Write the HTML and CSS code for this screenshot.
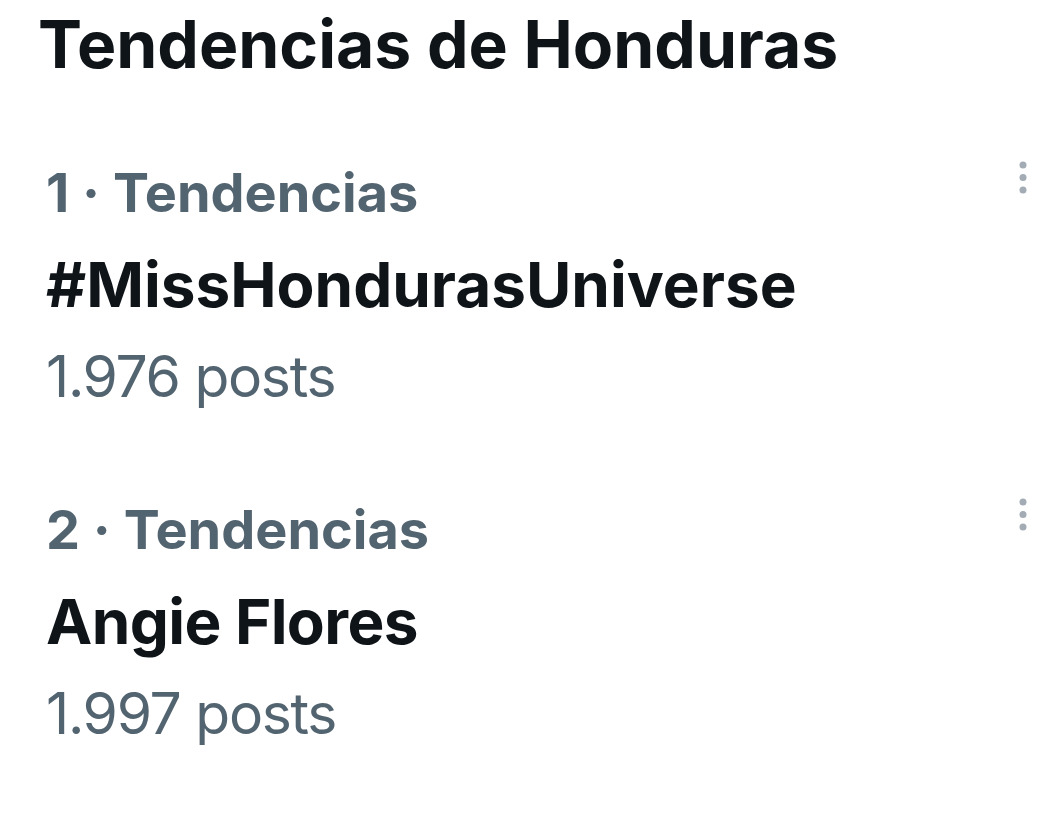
FILE: index.html
```html
<!DOCTYPE html>
<html lang="es">
<head>
    <meta charset="UTF-8">
    <title>Tendencias de Honduras</title>
    <link rel="stylesheet" href="styles.css">
</head>
<body>
    <h1 class="title">Tendencias de Honduras</h1>
    <div class="trends">
        <div class="trend">
            <div class="trend-text">
                <div class="meta">1 · Tendencias</div>
                <div class="name">#MissHondurasUniverse</div>
                <div class="count">1.976 posts</div>
            </div>
            <svg class="more" width="12" height="33" viewBox="0 0 12 33">
                <circle cx="6" cy="4" r="3.5"/>
                <circle cx="6" cy="16.5" r="3.5"/>
                <circle cx="6" cy="29" r="3.5"/>
            </svg>
        </div>
        <div class="trend">
            <div class="trend-text">
                <div class="meta">2 · Tendencias</div>
                <div class="name name-short">Angie Flores</div>
                <div class="count">1.997 posts</div>
            </div>
            <svg class="more" width="12" height="33" viewBox="0 0 12 33">
                <circle cx="6" cy="4" r="3.5"/>
                <circle cx="6" cy="16.5" r="3.5"/>
                <circle cx="6" cy="29" r="3.5"/>
            </svg>
        </div>
    </div>
</body>
</html>
```

FILE: styles.css
```css
body {
    margin: 0;
    padding: 0;
    background: #ffffff;
    font-family: 'Inter', 'Liberation Sans', sans-serif;
    color: #0f1419;
}

.title {
    margin: 0;
    padding: 4px 0 0 38px;
    font-size: 66px;
    font-weight: 700;
    line-height: 80px;
}

.trends {
    display: flex;
    flex-direction: column;
    gap: 73px;
    padding: 69px 0 0 46px;
}

.trend {
    display: flex;
    justify-content: space-between;
    align-items: flex-start;
    padding-right: 29px;
}

.meta {
    font-size: 54px;
    font-weight: 700;
    color: #536471;
    line-height: 80px;
}

.name {
    font-size: 62px;
    font-weight: 700;
    line-height: 104px;
}

.name-short {
    letter-spacing: -0.6px;
}

.count {
    font-size: 57px;
    letter-spacing: -1.3px;
    color: #536471;
    line-height: 80px;
}

.more {
    fill: #a3acb4;
    margin-top: 8px;
}
```
